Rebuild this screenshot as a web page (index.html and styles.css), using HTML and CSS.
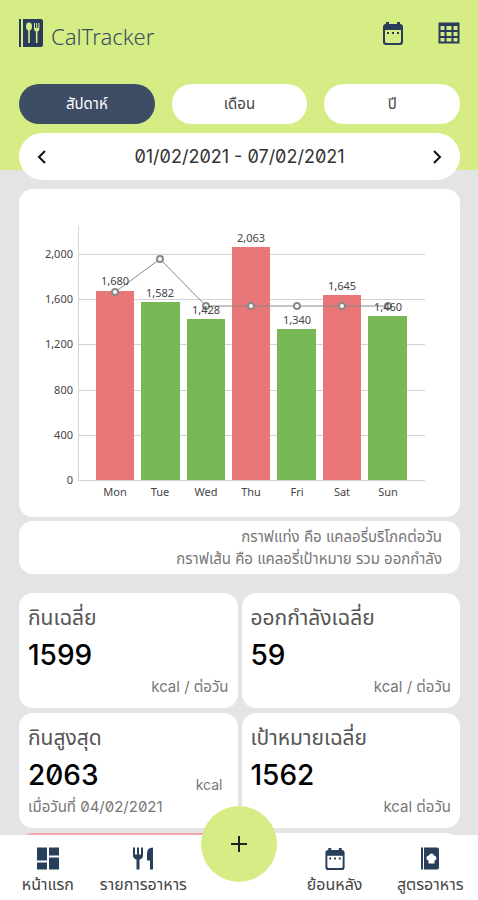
FILE: index.html
```html
<!DOCTYPE html>
<html lang="th">
<head>
<meta charset="utf-8">
<meta name="viewport" content="width=device-width, initial-scale=1">
<title>CalTracker</title>
<link rel="stylesheet" href="styles.css">
</head>
<body>
<svg class="defs" aria-hidden="true">
  <symbol id="calendar" viewBox="0 0 22 24">
    <path d="M4 1h3v2h8V1h3v2c2 0 3 1 3 3v15c0 2-1 3-3 3H4c-2 0-3-1-3-3V6c0-2 1-3 3-3zM3 9v11c0 1 .5 2 2 2h12c1.500 0 2-1 2-2V9z" fill-rule="evenodd"/>
    <path d="M5 11h2v2H5zM10 11h2v2h-2zM15 11h2v2h-2z"/>
  </symbol>
</svg>
<div class="app">
  <main class="content">
    <header class="topbar">
      <h1 class="brand">
        <svg class="logo" viewBox="0 0 24 28" aria-hidden="true">
          <path class="navy" d="M0 0h2v28H0zM4 0h18q2 0 2 2v24q0 2-2 2H4z"/>
          <ellipse class="lime" cx="10" cy="7.500" rx="3" ry="4"/>
          <path class="lime" d="M9.200 10h1.600v14H9.200zM15 4h1v5h1.200V4h1v5h1.200V4h1v6q0 2-1.900 2.600V24h-1.600V12.600Q15 12 15 10z"/>
        </svg>
        <span>CalTracker</span>
      </h1>
      <div class="tools">
        <button class="tool" type="button" aria-label="ปฏิทิน"><svg class="tool-icon" viewBox="0 0 22 24"><use href="#calendar"/></svg></button>
        <button class="tool" type="button" aria-label="ตาราง"><svg class="tool-icon" viewBox="0 0 22 22"><path class="grid-lines" d="M1.500 1.500h19v19h-19zM1 3h20M1 9h20M1 15h20M7.500 2v19M14.500 2v19"/></svg></button>
      </div>
    </header>
    <div class="tabs">
      <button class="tab active" type="button">สัปดาห์</button>
      <button class="tab" type="button">เดือน</button>
      <button class="tab" type="button">ปี</button>
    </div>
    <section class="range">
      <button class="arrow" type="button" aria-label="ก่อนหน้า"><svg viewBox="0 0 10 14"><path d="M8 1 2 7l6 6"/></svg></button>
      <span>01/02/2021 - 07/02/2021</span>
      <button class="arrow" type="button" aria-label="ถัดไป"><svg viewBox="0 0 10 14"><path d="m2 1 6 6-6 6"/></svg></button>
    </section>
    <section class="card chart-card">
      <svg class="chart" viewBox="19 189 441 328" role="img" aria-label="แคลอรี่ต่อวัน">
        <path class="rule" d="M78 254.500h347M78 299.500h347M78 344.500h347M78 390.500h347M78 435.500h347M78 480.500h347M78.500 226v255"/>
        <g class="over"><rect x="96" y="291" width="38" height="189"/><rect x="232" y="247" width="38" height="233"/><rect x="323" y="295" width="38" height="185"/></g>
        <g class="under"><rect x="141" y="302" width="39" height="178"/><rect x="187" y="319" width="38" height="161"/><rect x="277" y="329" width="39" height="151"/><rect x="368" y="316" width="39" height="164"/></g>
        <path class="target" d="M115 292 160 259l46 47h182"/>
        <g class="dots"><circle cx="115" cy="292" r="3"/><circle cx="160" cy="259" r="3"/><circle cx="206" cy="306" r="3"/><circle cx="251" cy="306" r="3"/><circle cx="297" cy="306" r="3"/><circle cx="342" cy="306" r="3"/><circle cx="388" cy="306" r="3"/></g>
        <g class="axis-y"><text x="73" y="258">2,000</text><text x="73" y="303">1,600</text><text x="73" y="348">1,200</text><text x="73" y="394">800</text><text x="73" y="439">400</text><text x="73" y="484">0</text></g>
        <g class="axis-x"><text x="115" y="496">Mon</text><text x="160" y="496">Tue</text><text x="206" y="496">Wed</text><text x="251" y="496">Thu</text><text x="297" y="496">Fri</text><text x="342" y="496">Sat</text><text x="388" y="496">Sun</text></g>
        <g class="axis-x"><text x="115" y="285">1,680</text><text x="160" y="297">1,582</text><text x="206" y="314">1,428</text><text x="251" y="242">2,063</text><text x="297" y="324">1,340</text><text x="342" y="290">1,645</text><text x="388" y="311">1,460</text></g>
      </svg>
    </section>
    <section class="card legend">
      <p>กราฟแท่ง คือ แคลอรี่บริโภคต่อวัน</p>
      <p>กราฟเส้น คือ แคลอรี่เป้าหมาย รวม ออกกำลัง</p>
    </section>
    <section class="stats">
      <article class="card stat"><h2>กินเฉลี่ย</h2><strong>1599</strong><p class="unit">kcal / ต่อวัน</p></article>
      <article class="card stat"><h2>ออกกำลังเฉลี่ย</h2><strong>59</strong><p class="unit">kcal / ต่อวัน</p></article>
      <article class="card stat"><h2>กินสูงสุด</h2><div class="peak"><strong>2063</strong><span>kcal</span></div><p>เมื่อวันที่ 04/02/2021</p></article>
      <article class="card stat"><h2>เป้าหมายเฉลี่ย</h2><strong>1562</strong><p class="unit">kcal ต่อวัน</p></article>
      <article class="card stat alert"></article>
      <article class="card stat"></article>
    </section>
  </main>
  <nav class="nav">
    <a href="#home"><svg viewBox="0 0 22 22"><path d="M0 0h10v13H0zM12 0h10v8H12zM0 15h10v7H0zM12 10h10v12H12z"/></svg><span>หน้าแรก</span></a>
    <a href="#foods"><svg viewBox="0 0 22 22"><path d="M1 0h2v7h2V0h2v7h2V0h2v8q0 3-3.500 4v10h-3V12Q1 11 1 8zM21 0v22h-3v-9h-3V6q0-6 6-6z"/></svg><span>รายการอาหาร</span></a>
    <button class="add" type="button" aria-label="เพิ่ม"><svg viewBox="0 0 18 18"><path d="M9 1v16M1 9h16"/></svg></button>
    <a href="#history"><svg viewBox="0 0 22 24"><use href="#calendar"/></svg><span>ย้อนหลัง</span></a>
    <a href="#recipes"><svg viewBox="0 0 22 22"><path fill-rule="evenodd" d="M2 0h2v22H2zM5 0h13q2 0 2 2v18q0 2-2 2H5zM12.500 6Q10.500 6 10 8 7.500 8 7.500 10.500T9.500 13v3h6v-3q2-.5 2-2.500T15 8q-.5-2-2.500-2z"/></svg><span>สูตรอาหาร</span></a>
  </nav>
</div>
</body>
</html>
```
FILE: styles.css
```css
* { box-sizing: border-box; }
body {
  margin: 0;
  color: #555;
  font-family: Inter, "Noto Sans Thai", "Noto Sans", sans-serif;
  font-variant-numeric: slashed-zero;
}
h1, h2, p { margin: 0; font-weight: 400; }
button { border: 0; padding: 0; background: none; color: inherit; font: inherit; }
.defs { position: absolute; width: 0; height: 0; }
.app { display: flex; flex-direction: column; height: 100vh; overflow: hidden; }
.content {
  flex: 1;
  min-height: 0;
  overflow: auto;
  scrollbar-width: none;
  padding: 0 18px 0 19px;
  background: linear-gradient(#d5ed84 170px, #e4e4e4 170px);
}
.topbar { display: flex; justify-content: space-between; align-items: center; height: 66px; margin-bottom: 18px; }
.brand { display: flex; align-items: center; gap: 8px; color: #3d4d62; font: 300 22px/28px "Noto Sans", sans-serif; }
.brand span { padding-top: 6px; }
.logo { width: 24px; height: 28px; }
.navy { fill: #2b3b5c; }
.lime { fill: #d5ed84; }
.tools { display: flex; gap: 34px; }
.tool { width: 22px; height: 24px; }
.tool-icon { display: block; width: 22px; height: 24px; fill: #2b3b5c; }
.grid-lines { fill: none; stroke: #2b3b5c; stroke-width: 2; }
.tabs { display: grid; grid-template-columns: repeat(3, 1fr); gap: 17px; margin-bottom: 9px; }
.tab { height: 40px; border-radius: 20px; background: #fff; color: #444; font-size: 15px; }
.tab.active { background: #3d4d66; color: #fff; }
.range {
  display: flex;
  align-items: center;
  justify-content: space-between;
  height: 47px;
  margin-bottom: 9px;
  padding: 0 18px;
  border-radius: 24px;
  background: #fff;
  color: #333;
  font-size: 18px;
}
.arrow { width: 10px; height: 14px; }
.arrow svg { display: block; fill: none; stroke: #111; stroke-width: 2; }
.card { border-radius: 14px; background: #fff; }
.chart-card { margin-bottom: 4px; }
.chart { display: block; width: 100%; font: 11px "Noto Sans", sans-serif; font-variant-numeric: normal; fill: #444; }
.rule { fill: none; stroke: #d4d4d4; }
.over { fill: #e97777; }
.under { fill: #77b854; }
.axis-y { text-anchor: end; }
.axis-x { text-anchor: middle; }
.target { fill: none; stroke: #888; stroke-width: 1; }
.dots { fill: #fff; stroke: #888; stroke-width: 2; }
.legend { margin-bottom: 19px; padding: 5px 18px 4px; color: #777; font-size: 15px; line-height: 22px; text-align: right; }
.stats { display: grid; grid-template-columns: 1fr 1fr; gap: 5px 4px; }
.stat { height: 115px; padding: 10px 9px; color: #777; font-size: 15px; line-height: 20px; }
.stat h2 { color: #555; font-size: 21px; line-height: 30px; }
.stat strong { display: block; color: #000; font-size: 28px; font-weight: 500; line-height: 44px; }
.unit { text-align: right; }
.peak { display: flex; justify-content: space-between; align-items: flex-end; padding-right: 6px; }
.peak span { font-size: 14px; line-height: 24px; }
.alert { background: #f2a5a5; }
.nav {
  display: grid;
  grid-template-columns: repeat(5, minmax(0, 1fr));
  justify-items: center;
  height: 65px;
  background: #fff;
  color: #444;
  font-size: 16px;
}
.nav a { display: flex; flex-direction: column; align-items: center; gap: 3px; padding-top: 12px; color: inherit; line-height: 22px; text-decoration: none; white-space: nowrap; }
.nav a svg { width: 22px; height: 23px; fill: #283f5c; }
.add { position: relative; top: -29px; display: grid; place-items: center; width: 76px; height: 76px; border-radius: 50%; background: #d5ed84; }
.add svg { width: 18px; height: 18px; fill: none; stroke: #222; stroke-width: 2; }
```
